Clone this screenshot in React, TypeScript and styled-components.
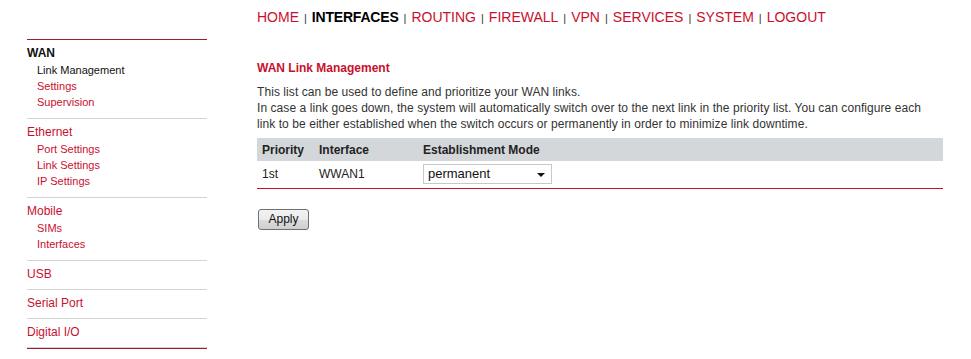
import React from 'react';
import styled, { createGlobalStyle } from 'styled-components';

const GlobalStyle = createGlobalStyle`
  html, body {
    margin: 0;
    padding: 0;
    background: #fff;
  }
  body {
    font-family: "Liberation Sans", Arial, sans-serif;
    font-size: 12px;
    color: #333;
  }
`;

const RED = '#c8102e';
const DARK_RED = '#9e1b32';

const Layout = styled.div`
  display: flex;
  align-items: flex-start;
  padding-left: 27px;
  width: 971px;
  height: 359px;
  box-sizing: border-box;
`;

const Sidebar = styled.nav`
  width: 180px;
  margin-top: 39px;
  border-top: 1px solid ${DARK_RED};
  border-bottom: 1px solid ${DARK_RED};
`;

const Section = styled.div`
  padding: 5px 0 7px;
  & + & {
    border-top: 1px solid #d3d3d3;
  }
  &:last-child {
    border-bottom: 1px solid #d3d3d3;
  }
`;

const SectionTitle = styled.a<{ $active?: boolean }>`
  display: block;
  line-height: 16px;
  font-size: 12px;
  font-weight: ${p => (p.$active ? 'bold' : 'normal')};
  color: ${p => (p.$active ? '#111' : RED)};
  text-decoration: none;
`;

const ItemList = styled.ul`
  list-style: none;
  margin: 1px 0;
  padding: 0 0 0 10px;
`;

const Item = styled.li<{ $active?: boolean }>`
  line-height: 16px;
  font-size: 11px;
  color: ${p => (p.$active ? '#111' : RED)};
`;

const Main = styled.main`
  margin-left: 50px;
  width: 686px;
`;

const TopNav = styled.div`
  padding-top: 8px;
  line-height: 18px;
  font-size: 14px;
  white-space: nowrap;
`;

const NavLink = styled.a<{ $active?: boolean }>`
  color: ${p => (p.$active ? '#000' : RED)};
  font-weight: ${p => (p.$active ? 'bold' : 'normal')};
  text-decoration: none;
  letter-spacing: ${p => (p.$active ? '-0.2px' : '0')};
`;

const NavSep = styled.span`
  font-size: 11px;
  color: #333;
  margin: 0 5px;
`;

const Title = styled.h2`
  margin: 33px 0 8px;
  font-size: 12px;
  line-height: 16px;
  font-weight: bold;
  color: ${RED};
`;

const Description = styled.p`
  margin: 0 0 6px;
  line-height: 16px;
  font-size: 12px;
  color: #333;
  white-space: nowrap;
  letter-spacing: 0.07px;
`;

const Table = styled.table`
  width: 100%;
  border-collapse: collapse;
  font-size: 12px;
`;

const HeadCell = styled.th<{ $w?: number }>`
  background: #d4d7da;
  height: 23px;
  padding: 0 0 0 5px;
  text-align: left;
  font-weight: bold;
  color: #222;
  width: ${p => (p.$w ? `${p.$w}px` : 'auto')};
  box-sizing: border-box;
`;

const Row = styled.tr`
  border-bottom: 1px solid ${RED};
`;

const Cell = styled.td`
  height: 27px;
  padding: 0 0 0 5px;
  color: #222;
  box-sizing: border-box;
`;

const SelectBox = styled.div`
  position: relative;
  width: 129px;
  height: 20px;
  border: 1px solid #c8c8c8;
  box-sizing: border-box;
  background: #fff;
  font-size: 13px;
  line-height: 18px;
  padding-left: 4px;
  color: #111;
`;

const Caret = styled.span`
  position: absolute;
  right: 6px;
  top: 8px;
  width: 0;
  height: 0;
  border-left: 4px solid transparent;
  border-right: 4px solid transparent;
  border-top: 4px solid #111;
`;

const ApplyButton = styled.button`
  margin: 20px 0 0 1px;
  width: 51px;
  height: 21px;
  padding: 0;
  border: 1px solid #707070;
  border-radius: 3px;
  background: linear-gradient(#f2f2f2, #ebebeb 50%, #dddddd 51%, #cfcfcf);
  font-family: "Liberation Sans", Arial, sans-serif;
  font-size: 12px;
  color: #111;
`;

const navItems = ['HOME', 'INTERFACES', 'ROUTING', 'FIREWALL', 'VPN', 'SERVICES', 'SYSTEM', 'LOGOUT'];

const sections = [
  { title: 'WAN', active: true, items: ['Link Management', 'Settings', 'Supervision'] },
  { title: 'Ethernet', items: ['Port Settings', 'Link Settings', 'IP Settings'] },
  { title: 'Mobile', items: ['SIMs', 'Interfaces'] },
  { title: 'USB', items: [] },
  { title: 'Serial Port', items: [] },
  { title: 'Digital I/O', items: [] },
];

export default function App() {
  return (
    <>
      <GlobalStyle />
      <Layout>
        <Sidebar>
          {sections.map(s => (
            <Section key={s.title}>
              <SectionTitle $active={s.active}>{s.title}</SectionTitle>
              {s.items.length > 0 && (
                <ItemList>
                  {s.items.map(item => (
                    <Item key={item} $active={item === 'Link Management'}>
                      {item}
                    </Item>
                  ))}
                </ItemList>
              )}
            </Section>
          ))}
        </Sidebar>

        <Main>
          <TopNav>
            {navItems.map((n, i) => (
              <React.Fragment key={n}>
                {i > 0 && <NavSep>|</NavSep>}
                <NavLink $active={n === 'INTERFACES'}>{n}</NavLink>
              </React.Fragment>
            ))}
          </TopNav>

          <Title>WAN Link Management</Title>
          <Description>
            This list can be used to define and prioritize your WAN links.
            <br />
            In case a link goes down, the system will automatically switch over to the next link in the priority list. You can configure each
            <br />
            link to be either established when the switch occurs or permanently in order to minimize link downtime.
          </Description>

          <Table>
            <thead>
              <tr>
                <HeadCell $w={57}>Priority</HeadCell>
                <HeadCell $w={104}>Interface</HeadCell>
                <HeadCell>Establishment Mode</HeadCell>
              </tr>
            </thead>
            <tbody>
              <Row>
                <Cell>1st</Cell>
                <Cell>WWAN1</Cell>
                <Cell>
                  <SelectBox>
                    permanent
                    <Caret />
                  </SelectBox>
                </Cell>
              </Row>
            </tbody>
          </Table>

          <ApplyButton>Apply</ApplyButton>
        </Main>
      </Layout>
    </>
  );
}
